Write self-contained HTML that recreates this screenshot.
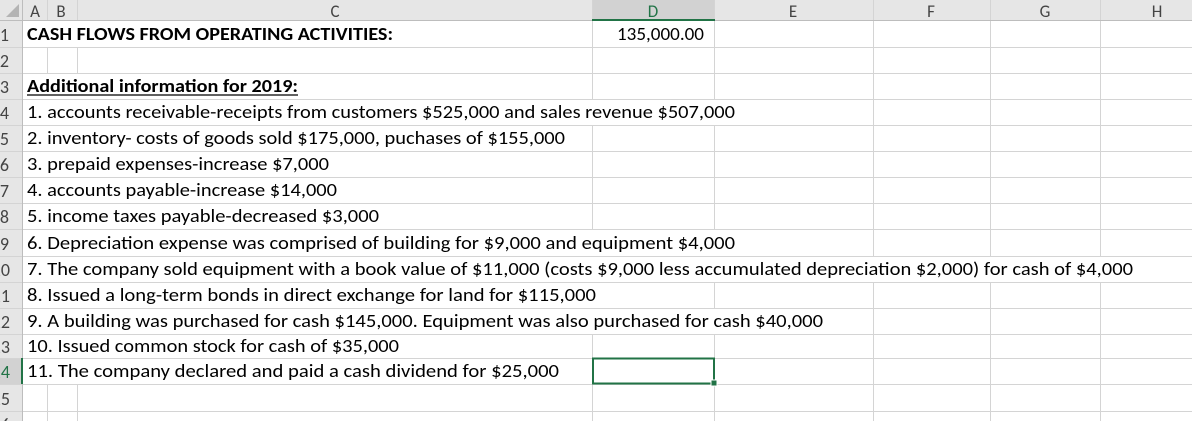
<!DOCTYPE html>
<html><head><style>body{margin:0;background:#fff;overflow:hidden}svg{display:block}</style></head><body>
<svg width="1192" height="421" xmlns="http://www.w3.org/2000/svg" font-family="Calibri, 'Liberation Sans', sans-serif">
<rect width="1192" height="421" fill="#fff"/>
<rect x="0" y="0" width="1192" height="21" fill="#e6e6e6"/>
<rect x="0" y="0" width="23" height="421" fill="#e6e6e6"/>
<rect x="592" y="0" width="123" height="21" fill="#d2d2d2"/>
<rect x="0" y="358" width="23" height="26" fill="#d2d2d2"/>
<polygon points="6,17 19,17 19,4" fill="#b4b4b4"/>
<g stroke="#d4d4d4" stroke-width="1">
<line x1="47.5" y1="0" x2="47.5" y2="421"/>
<line x1="77.5" y1="0" x2="77.5" y2="421"/>
<line x1="592.5" y1="0" x2="592.5" y2="421"/>
<line x1="714.5" y1="0" x2="714.5" y2="421"/>
<line x1="873.5" y1="0" x2="873.5" y2="421"/>
<line x1="990.5" y1="0" x2="990.5" y2="421"/>
<line x1="1100.5" y1="0" x2="1100.5" y2="421"/>
</g>
<!-- cover vertical lines where text overflows -->
<g fill="#fff">
<rect x="23" y="21" width="569" height="26"/>
<rect x="23" y="74" width="275" height="25"/>
<rect x="23" y="100" width="713" height="25"/>
<rect x="23" y="126" width="543" height="25"/>
<rect x="23" y="152" width="307" height="25"/>
<rect x="23" y="178" width="315" height="25"/>
<rect x="23" y="204" width="357" height="25"/>
<rect x="23" y="230" width="713" height="26"/>
<rect x="23" y="257" width="1111" height="25"/>
<rect x="23" y="283" width="574" height="25"/>
<rect x="23" y="309" width="801" height="25"/>
<rect x="23" y="335" width="377" height="23"/>
<rect x="23" y="359" width="540" height="25"/>
</g>
<g stroke="#d4d4d4" stroke-width="1">
<line x1="0" y1="47.5" x2="1192" y2="47.5"/>
<line x1="0" y1="73.5" x2="1192" y2="73.5"/>
<line x1="0" y1="99.5" x2="1192" y2="99.5"/>
<line x1="0" y1="125.5" x2="1192" y2="125.5"/>
<line x1="0" y1="151.5" x2="1192" y2="151.5"/>
<line x1="0" y1="177.5" x2="1192" y2="177.5"/>
<line x1="0" y1="203.5" x2="1192" y2="203.5"/>
<line x1="0" y1="229.5" x2="1192" y2="229.5"/>
<line x1="0" y1="256.5" x2="1192" y2="256.5"/>
<line x1="0" y1="282.5" x2="1192" y2="282.5"/>
<line x1="0" y1="308.5" x2="1192" y2="308.5"/>
<line x1="0" y1="334.5" x2="1192" y2="334.5"/>
<line x1="0" y1="358.5" x2="1192" y2="358.5"/>
<line x1="0" y1="384.5" x2="1192" y2="384.5"/>
<line x1="0" y1="411.5" x2="1192" y2="411.5"/>
</g>
<line x1="0" y1="20.5" x2="1192" y2="20.5" stroke="#bdbdbd"/>
<line x1="22.5" y1="0" x2="22.5" y2="421" stroke="#bdbdbd"/>
<line x1="592" y1="20" x2="715" y2="20" stroke="#217346" stroke-width="2"/>
<line x1="22" y1="358" x2="22" y2="384" stroke="#217346" stroke-width="2"/>
<rect x="593" y="358.5" width="121" height="25" fill="none" stroke="#217346" stroke-width="2"/>
<rect x="711" y="380" width="6" height="6" fill="#217346" stroke="#fff" stroke-width="1"/>
<g font-size="17" fill="#444" text-anchor="middle">
<text x="35" y="17">A</text><text x="61" y="17">B</text><text x="335" y="17">C</text>
<text x="653" y="17" fill="#217346">D</text><text x="793" y="17">E</text><text x="931" y="17">F</text>
<text x="1045" y="17">G</text><text x="1157" y="17">H</text>
</g>
<g font-size="18" fill="#444" text-anchor="end">
<text x="9" y="41">1</text><text x="9" y="67">2</text><text x="9" y="93">3</text><text x="9" y="119">4</text>
<text x="9" y="145">5</text><text x="9" y="171">6</text><text x="9" y="197">7</text><text x="9" y="223">8</text>
<text x="9" y="250">9</text><text x="10" y="276">10</text><text x="10" y="302">11</text><text x="10" y="328">12</text>
<text x="10" y="353">13</text><text x="10" y="378" fill="#217346">14</text><text x="10" y="405">15</text><text x="10" y="431">16</text>
</g>
<g font-size="18" fill="#000">
<text x="27" y="40" font-weight="bold" textLength="366" lengthAdjust="spacingAndGlyphs">CASH FLOWS FROM OPERATING ACTIVITIES:</text>
<text x="617" y="40" textLength="87" lengthAdjust="spacingAndGlyphs">135,000.00</text>
<text x="27" y="92" font-weight="bold" textLength="271" lengthAdjust="spacingAndGlyphs">Additional information for 2019:</text>
<text x="27" y="118" textLength="708" lengthAdjust="spacingAndGlyphs">1. accounts receivable-receipts from customers $525,000 and sales revenue $507,000</text>
<text x="27" y="144" textLength="538" lengthAdjust="spacingAndGlyphs">2. inventory- costs of goods sold $175,000, puchases of $155,000</text>
<text x="27" y="170" textLength="302" lengthAdjust="spacingAndGlyphs">3. prepaid expenses-increase $7,000</text>
<text x="27" y="196" textLength="310" lengthAdjust="spacingAndGlyphs">4. accounts payable-increase $14,000</text>
<text x="27" y="222" textLength="352" lengthAdjust="spacingAndGlyphs">5. income taxes payable-decreased $3,000</text>
<text x="27" y="249" textLength="708" lengthAdjust="spacingAndGlyphs">6. Depreciation expense was comprised of building for $9,000 and equipment $4,000</text>
<text x="27" y="275" textLength="1106" lengthAdjust="spacingAndGlyphs">7. The company sold equipment with a book value of $11,000 (costs $9,000 less accumulated depreciation $2,000) for cash of $4,000</text>
<text x="27" y="301" textLength="569" lengthAdjust="spacingAndGlyphs">8. Issued a long-term bonds in direct exchange for land for $115,000</text>
<text x="27" y="327" textLength="796" lengthAdjust="spacingAndGlyphs">9. A building was purchased for cash $145,000. Equipment was also purchased for cash $40,000</text>
<text x="27" y="352" textLength="372" lengthAdjust="spacingAndGlyphs">10. Issued common stock for cash of $35,000</text>
<text x="27" y="377" textLength="532" lengthAdjust="spacingAndGlyphs">11. The company declared and paid a cash dividend for $25,000</text>
</g>
<line x1="27" y1="95" x2="298" y2="95" stroke="#000" stroke-width="1.3"/>
</svg>
</body></html>
